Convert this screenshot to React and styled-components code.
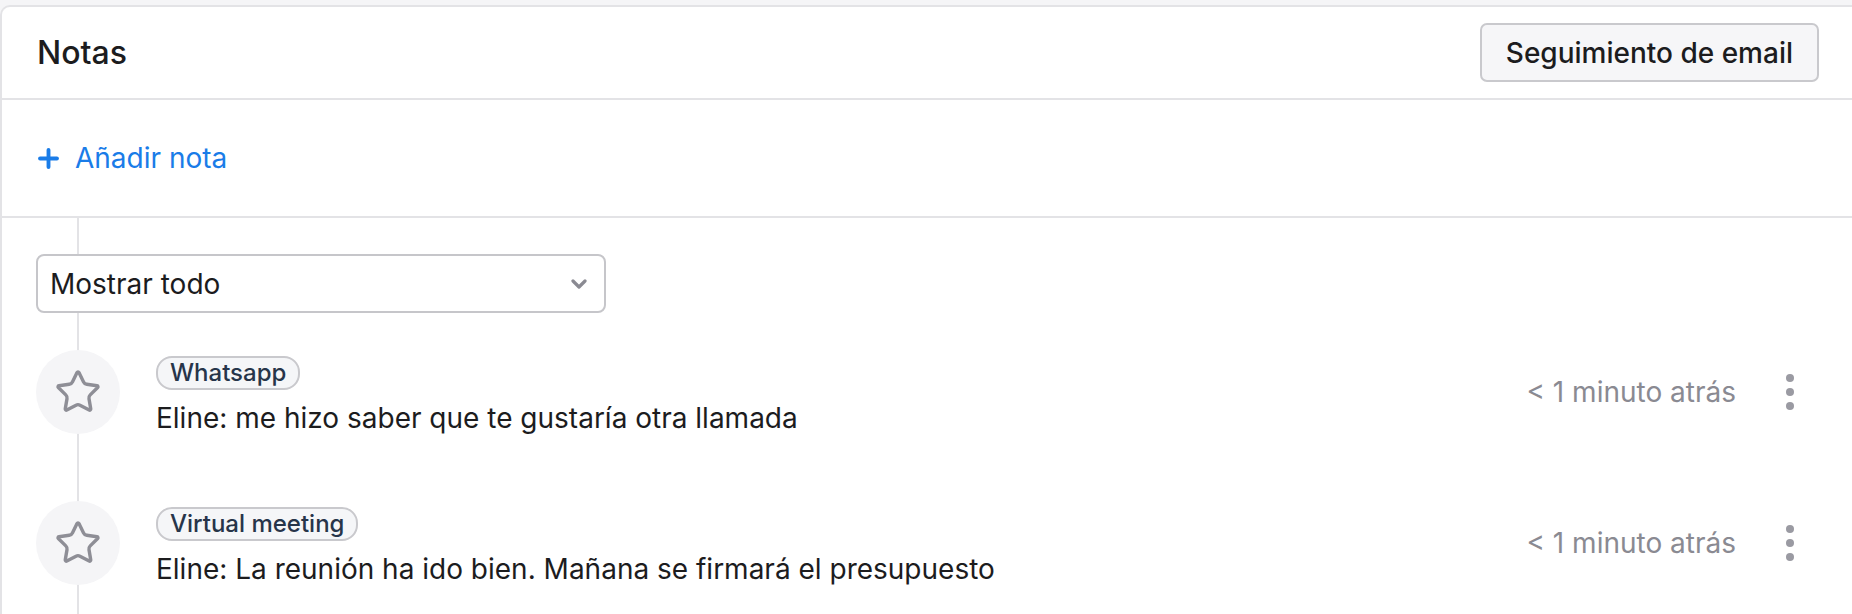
import React from 'react';
import styled, { createGlobalStyle } from 'styled-components';
import { Star, Plus } from 'lucide-react';

const GlobalStyle = createGlobalStyle`
  body {
    margin: 0;
    font-family: Inter, "Noto Sans", sans-serif;
    background: #f5f5f7;
    color: #1c1c1e;
  }
`

const StyledPage = styled.div`
  padding-top: 5px;
  height: 609px;
  overflow: hidden;
`

const StyledCard = styled.div`
  background: #fff;
  border-top: 2px solid #e3e3e6;
  border-left: 2px solid #e3e3e6;
  border-top-left-radius: 10px;
  height: 100%;
`

const StyledHeader = styled.div`
  display: flex;
  align-items: center;
  justify-content: space-between;
  height: 91px;
  padding: 0 33px 0 35px;
  border-bottom: 2px solid #e3e3e6;
`

const StyledTitle = styled.h1`
  margin: 0;
  font-size: 32px;
  font-weight: 500;
  color: #1c1c1e;
`

const StyledButton = styled.button`
  height: 59px;
  padding: 0 24px;
  font-family: inherit;
  font-size: 28px;
  font-weight: 500;
  color: #1c1c1e;
  background: #f6f6f8;
  border: 2px solid #c9c9cd;
  border-radius: 7px;
`

const StyledAddSection = styled.div`
  display: flex;
  align-items: center;
  height: 116px;
  padding-left: 32px;
  border-bottom: 2px solid #e3e3e6;
`

const StyledAddLink = styled.a`
  display: flex;
  align-items: center;
  gap: 12px;
  font-size: 28px;
  color: #1a7ce8;
  cursor: pointer;
`

const StyledTimeline = styled.div`
  position: relative;
  padding: 36px 0 0 34px;
`

const StyledLine = styled.div`
  position: absolute;
  left: 75px;
  top: 0;
  bottom: -200px;
  width: 2px;
  background: #e3e3e6;
`

const StyledSelect = styled.div`
  position: relative;
  display: flex;
  align-items: center;
  justify-content: space-between;
  box-sizing: border-box;
  width: 570px;
  height: 59px;
  padding: 0 17px 0 12px;
  font-size: 28px;
  background: #fff;
  border: 2px solid #c6c6ca;
  border-radius: 8px;
`

const StyledList = styled.div`
  position: relative;
  display: flex;
  flex-direction: column;
  gap: 65px;
  margin-top: 37px;
`

const StyledRow = styled.div`
  display: flex;
  align-items: flex-start;
  gap: 36px;
  padding-right: 58px;
`

const StyledIconCircle = styled.div`
  display: flex;
  align-items: center;
  justify-content: center;
  flex: none;
  width: 84px;
  height: 84px;
  border-radius: 50%;
  background: #f5f5f7;
  color: #8e8e96;
`

const StyledBody = styled.div`
  flex: 1;
  padding-top: 6px;
`

const StyledTag = styled.span`
  display: inline-block;
  padding: 0 12px;
  height: 30px;
  line-height: 30px;
  font-size: 24px;
  font-weight: 500;
  color: #27354a;
  background: #f5f6f8;
  border: 2px solid #c9c9cd;
  border-radius: 16px;
`

const StyledText = styled.div`
  margin-top: 10px;
  font-size: 28px;
  line-height: 36px;
  color: #1c1c1e;
`

const StyledMeta = styled.div`
  display: flex;
  align-items: center;
  gap: 50px;
  height: 84px;
`

const StyledTime = styled.span`
  font-size: 28px;
  color: #8a8a92;
`

const StyledDots = styled.div`
  display: flex;
  flex-direction: column;
  gap: 6px;
  span {
    width: 8px;
    height: 8px;
    border-radius: 50%;
    background: #9a9aa2;
  }
`

const notes = [
  { tag: 'Whatsapp', text: 'Eline: me hizo saber que te gustaría otra llamada', time: '< 1 minuto atrás' },
  { tag: 'Virtual meeting', text: 'Eline: La reunión ha ido bien. Mañana se firmará el presupuesto', time: '< 1 minuto atrás' },
];

const App = () => {
  return (
    <>
      <GlobalStyle />
      <StyledPage>
        <StyledCard>
          <StyledHeader>
            <StyledTitle>Notas</StyledTitle>
            <StyledButton>Seguimiento de email</StyledButton>
          </StyledHeader>
          <StyledAddSection>
            <StyledAddLink>
              <Plus size={29} strokeWidth={3.2} />
              Añadir nota
            </StyledAddLink>
          </StyledAddSection>
          <StyledTimeline>
            <StyledLine />
            <StyledSelect>
              Mostrar todo
              <svg width="16" height="10" viewBox="0 0 16 10">
                <polyline points="2,2 8,8 14,2" fill="none" stroke="#8a8a92" strokeWidth="3.2" strokeLinecap="round" strokeLinejoin="round" />
              </svg>
            </StyledSelect>
            <StyledList>
              {notes.map(n => (
                <StyledRow key={n.tag}>
                  <StyledIconCircle>
                    <Star size={48} strokeWidth={1.7} />
                  </StyledIconCircle>
                  <StyledBody>
                    <StyledTag>{n.tag}</StyledTag>
                    <StyledText>{n.text}</StyledText>
                  </StyledBody>
                  <StyledMeta>
                    <StyledTime>{n.time}</StyledTime>
                    <StyledDots><span /><span /><span /></StyledDots>
                  </StyledMeta>
                </StyledRow>
              ))}
            </StyledList>
          </StyledTimeline>
        </StyledCard>
      </StyledPage>
    </>
  )
}

export default App;
